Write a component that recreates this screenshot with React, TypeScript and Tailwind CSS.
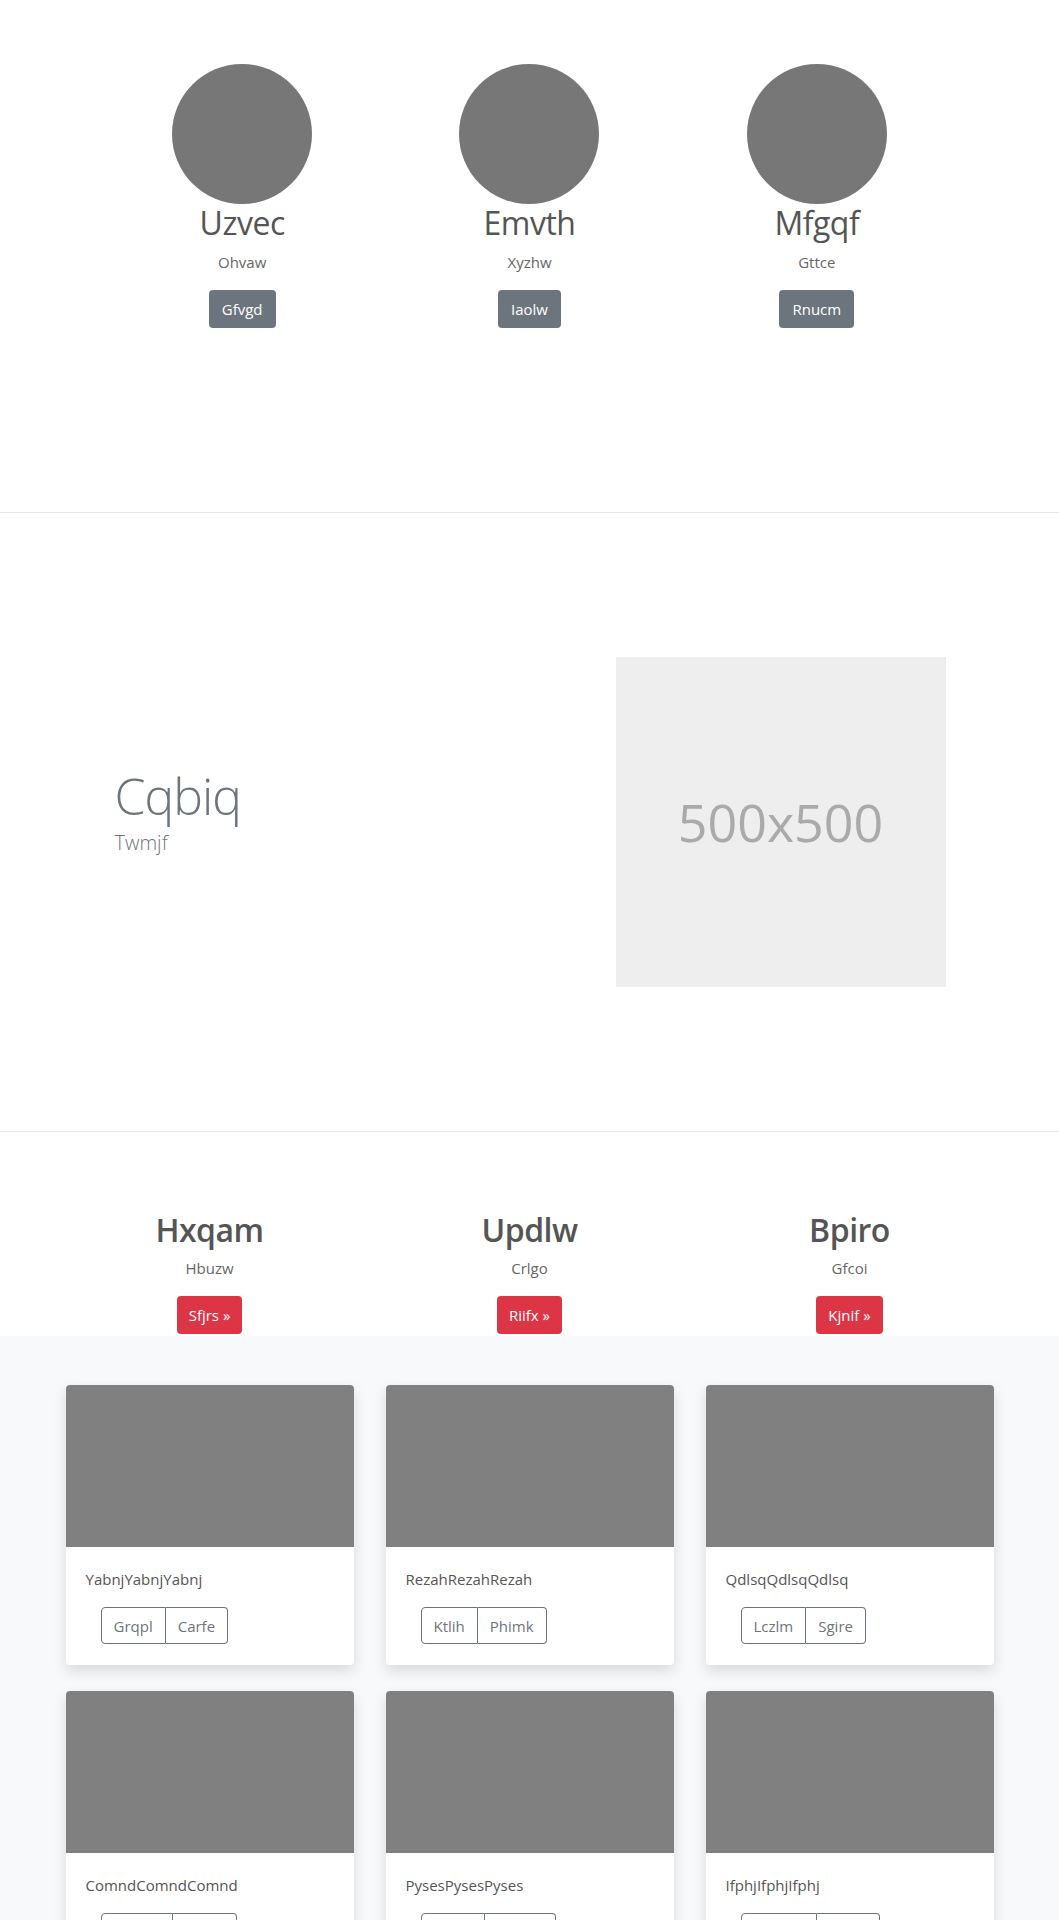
import React from "react";

const team = [
  { name: "Uzvec", sub: "Ohvaw", btn: "Gfvgd" },
  { name: "Emvth", sub: "Xyzhw", btn: "Iaolw" },
  { name: "Mfgqf", sub: "Gttce", btn: "Rnucm" },
];

const features = [
  { name: "Hxqam", sub: "Hbuzw", btn: "Sfjrs" },
  { name: "Updlw", sub: "Crlgo", btn: "Riifx" },
  { name: "Bpiro", sub: "Gfcoi", btn: "Kjnif" },
];

const cards = [
  { t: "Yabnj", a: "Grqpl", b: "Carfe" },
  { t: "Rezah", a: "Ktlih", b: "Phimk" },
  { t: "Qdlsq", a: "Lczlm", b: "Sgire" },
  { t: "Comnd", a: "Vwxqe", b: "Hbtuf" },
  { t: "Pyses", a: "Ojrkn", b: "Tmaze" },
  { t: "Ifphj", a: "Gnuwd", b: "Rblyo" },
];

export default function App() {
  return (
    <div className="font-['Open_Sans',sans-serif] bg-white text-[#555] h-[1920px] overflow-hidden">
      {/* Team */}
      <section className="h-[513px] border-b border-[#e5e5e5] pt-[64px]">
        <div className="w-[862px] mx-auto grid grid-cols-3">
          {team.map((m) => (
            <div key={m.name} className="flex flex-col items-center">
              <div className="w-[140px] h-[140px] rounded-full bg-[#777777]" />
              <h2 className="text-[32px] leading-[1.2] font-normal tracking-[-0.5px] text-[#555] mb-[8px]">{m.name}</h2>
              <p className="text-[15px] leading-[24px] text-[#666] mb-[16px]">{m.sub}</p>
              <button className="h-[38px] px-[13px] rounded-[4px] bg-[#6c757d] text-white text-[15px] leading-[24px]">
                {m.btn}
              </button>
            </div>
          ))}
        </div>
      </section>

      {/* Hero */}
      <section className="h-[619px] border-b border-[#e5e5e5]">
        <div className="w-[960px] h-full mx-auto flex items-center">
          <div className="w-[566px] pl-[65px] pb-[23px]">
            <h1 className="text-[50px] leading-[1.2] font-light tracking-[-1px] text-[#6c757d] mb-[4px]">Cqbiq</h1>
            <p className="text-[20px] leading-[26px] font-light text-[#6c757d]">Twmjf</p>
          </div>
          <div className="w-[330px] h-[330px] bg-[#eeeeee] flex items-center justify-center">
            <span className="text-[52px] text-[#aaaaaa] leading-none">500x500</span>
          </div>
        </div>
      </section>

      {/* Features */}
      <section className="h-[204px] pt-[79px]">
        <div className="w-[960px] mx-auto grid grid-cols-3">
          {features.map((f) => (
            <div key={f.name} className="flex flex-col items-center">
              <h2 className="text-[32px] leading-[1.2] font-semibold tracking-[-0.5px] text-[#555] mb-[7px]">{f.name}</h2>
              <p className="text-[15px] leading-[24px] text-[#666] mb-[16px]">{f.sub}</p>
              <button className="h-[38px] px-[12px] rounded-[4px] bg-[#dc3545] text-white text-[15px] leading-[24px]">
                {f.btn} »
              </button>
            </div>
          ))}
        </div>
      </section>

      {/* Album */}
      <section className="bg-[#f8f9fa] pt-[49px] pb-[48px]">
        <div className="w-[928px] mx-auto grid grid-cols-3 gap-x-[32px] gap-y-[26px]">
          {cards.map((c) => (
            <div key={c.t} className="bg-white rounded-[4px] overflow-hidden shadow-[0_6px_14px_rgba(0,0,0,0.13)]">
              <div className="h-[162px] bg-[#808080]" />
              <div className="pt-[20px] px-[20px] pb-[21px]">
                <p className="text-[15px] leading-[24px] text-[#555]">
                  {c.t}
                  {c.t}
                  {c.t}
                </p>
                <div className="mt-[16px] ml-[15px] inline-flex">
                  <button className="h-[37px] px-[12px] border border-[#6c757d] rounded-l-[4px] text-[#6c757d] text-[15px] leading-[24px]">
                    {c.a}
                  </button>
                  <button className="h-[37px] px-[12px] border border-l-0 border-[#6c757d] rounded-r-[4px] text-[#6c757d] text-[15px] leading-[24px]">
                    {c.b}
                  </button>
                </div>
              </div>
            </div>
          ))}
        </div>
      </section>
    </div>
  );
}
